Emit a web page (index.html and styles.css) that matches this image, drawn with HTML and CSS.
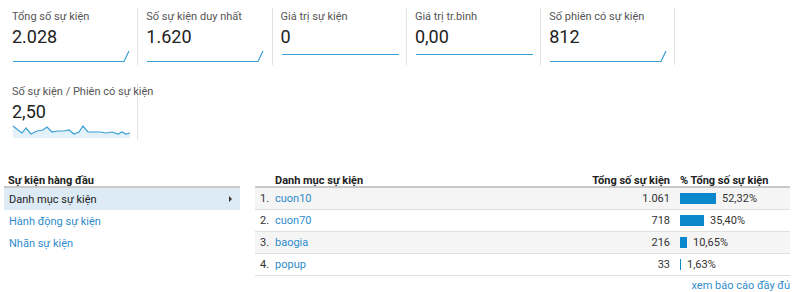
FILE: index.html
```html
<!DOCTYPE html>
<html>
<head>
    <title>Sự kiện</title>
    <meta charset="utf-8">
    <meta name="viewport" content="width=device-width, initial-scale=1.0">
    <link rel="stylesheet" href="styles.css">
</head>
<body>
    <div class="metrics">
        <div class="metric">
            <div class="label">Tổng số sự kiện</div>
            <div class="value">2.028</div>
            <svg class="spark" viewBox="0 0 118 14"><path d="M1 12.5 L112 12.5 L117 2" /></svg>
        </div>
        <div class="metric">
            <div class="label">Số sự kiện duy nhất</div>
            <div class="value">1.620</div>
            <svg class="spark" viewBox="0 0 118 14"><path d="M1 12.5 L112 12.5 L117 2" /></svg>
        </div>
        <div class="metric">
            <div class="label">Giá trị sự kiện</div>
            <div class="value">0</div>
            <svg class="spark" viewBox="0 0 118 14"><path d="M1 5.5 L118 5.5" /></svg>
        </div>
        <div class="metric">
            <div class="label">Giá trị tr.bình</div>
            <div class="value">0,00</div>
            <svg class="spark" viewBox="0 0 118 14"><path d="M1 5.5 L118 5.5" /></svg>
        </div>
        <div class="metric">
            <div class="label">Số phiên có sự kiện</div>
            <div class="value">812</div>
            <svg class="spark" viewBox="0 0 118 14"><path d="M1 12.5 L112 12.5 L117 2" /></svg>
        </div>
        <div class="metric">
            <div class="label">Số sự kiện / Phiên có sự kiện</div>
            <div class="value">2,50</div>
            <svg class="spark" viewBox="0 0 118 14">
                <path class="fill" d="M1 2 L6 6 L10 9 L14 4 L19 10 L25 7 L31 6 L35 3 L40 8 L46 7 L52 7 L57 6 L62 10 L67 8 L71 2 L76 8 L82 8 L88 8 L94 9 L100 8 L106 10 L110 8 L114 10 L118 9 L118 14 L1 14 Z" />
                <path d="M1 2 L6 6 L10 9 L14 4 L19 10 L25 7 L31 6 L35 3 L40 8 L46 7 L52 7 L57 6 L62 10 L67 8 L71 2 L76 8 L82 8 L88 8 L94 9 L100 8 L106 10 L110 8 L114 10 L118 9" />
            </svg>
        </div>
    </div>

    <div class="report">
        <div class="nav">
            <div class="navHead">Sự kiện hàng đầu</div>
            <div class="navItem active">Danh mục sự kiện <span class="arrow"></span></div>
            <div class="navItem">Hành động sự kiện</div>
            <div class="navItem">Nhãn sự kiện</div>
        </div>

        <div class="table">
            <div class="row head">
                <div></div>
                <div>Danh mục sự kiện</div>
                <div class="num">Tổng số sự kiện</div>
                <div class="pct">% Tổng số sự kiện</div>
            </div>
            <div class="row odd">
                <div class="idx">1.</div>
                <div class="link">cuon10</div>
                <div class="num">1.061</div>
                <div class="pct"><span class="bar" style="width:36px"></span>52,32%</div>
            </div>
            <div class="row">
                <div class="idx">2.</div>
                <div class="link">cuon70</div>
                <div class="num">718</div>
                <div class="pct"><span class="bar" style="width:24px"></span>35,40%</div>
            </div>
            <div class="row odd">
                <div class="idx">3.</div>
                <div class="link">baogia</div>
                <div class="num">216</div>
                <div class="pct"><span class="bar" style="width:7px"></span>10,65%</div>
            </div>
            <div class="row">
                <div class="idx">4.</div>
                <div class="link">popup</div>
                <div class="num">33</div>
                <div class="pct"><span class="bar" style="width:1px"></span>1,63%</div>
            </div>
            <div class="more">xem báo cáo đầy đủ</div>
        </div>
    </div>
</body>
</html>
```

FILE: styles.css
```css
*{
    margin:0;
    padding:0;
    box-sizing:border-box;
}

body{
    font-family:Roboto, "Liberation Sans", sans-serif;
    background-color:white;
    color:#333;
}

.metrics{
    display:flex;
    flex-wrap:wrap;
    width:680px;
    padding:8px 0 0 4px;
}

.metric{
    width:134.3px;
    height:57px;
    margin-bottom:18px;
    padding:2px 5px 0 8px;
    border-right:1px solid #e2e2e2;
}

.label{
    font-size:11px;
    line-height:14px;
    color:#555;
    white-space:nowrap;
}

.value{
    margin-top:2px;
    font-size:18px;
    line-height:22px;
    color:#222;
}

.spark{
    display:block;
    width:118px;
    height:14px;
    margin-top:1px;
    overflow:visible;
}

.spark path{
    fill:none;
    stroke:#3a9fd3;
    stroke-width:1.2;
}

.spark .fill{
    fill:#e3f1f9;
    stroke:none;
}

.report{
    display:flex;
    gap:15px;
    padding:0 10px 0 4px;
    margin-top:17px;
    font-size:11px;
}

.nav{
    width:236px;
}

.navHead{
    font-weight:bold;
    color:#222;
    line-height:11px;
    height:13px;
    padding-left:4px;
    border-bottom:2px solid #c9c9c9;
}

.navItem{
    display:flex;
    align-items:center;
    justify-content:space-between;
    height:22px;
    padding:0 8px 0 5px;
    color:#2f8ccb;
}

.navItem.active{
    background-color:#dcebf6;
    color:#222;
}

.arrow{
    width:0;
    height:0;
    border-top:3px solid transparent;
    border-bottom:3px solid transparent;
    border-left:3px solid #333;
}

.table{
    flex:1;
}

.row{
    display:grid;
    grid-template-columns:20px 1fr 80px 120px;
    align-items:center;
    height:22px;
    border-bottom:1px solid #e0e0e0;
}

.row.head{
    height:13px;
    align-items:start;
    line-height:11px;
    font-weight:bold;
    color:#222;
    border-bottom:2px solid #c9c9c9;
}

.row.odd{
    background-color:#f5f5f5;
}

.idx{
    padding-left:5px;
}

.link{
    color:#2f8ccb;
}

.num{
    text-align:right;
}

.pct{
    display:flex;
    align-items:center;
    padding-left:10px;
}

.bar{
    display:inline-block;
    height:11px;
    margin-right:6px;
    background-color:#0a88cb;
}

.more{
    text-align:right;
    margin-top:3px;
    line-height:13px;
    color:#2f8ccb;
}
```
